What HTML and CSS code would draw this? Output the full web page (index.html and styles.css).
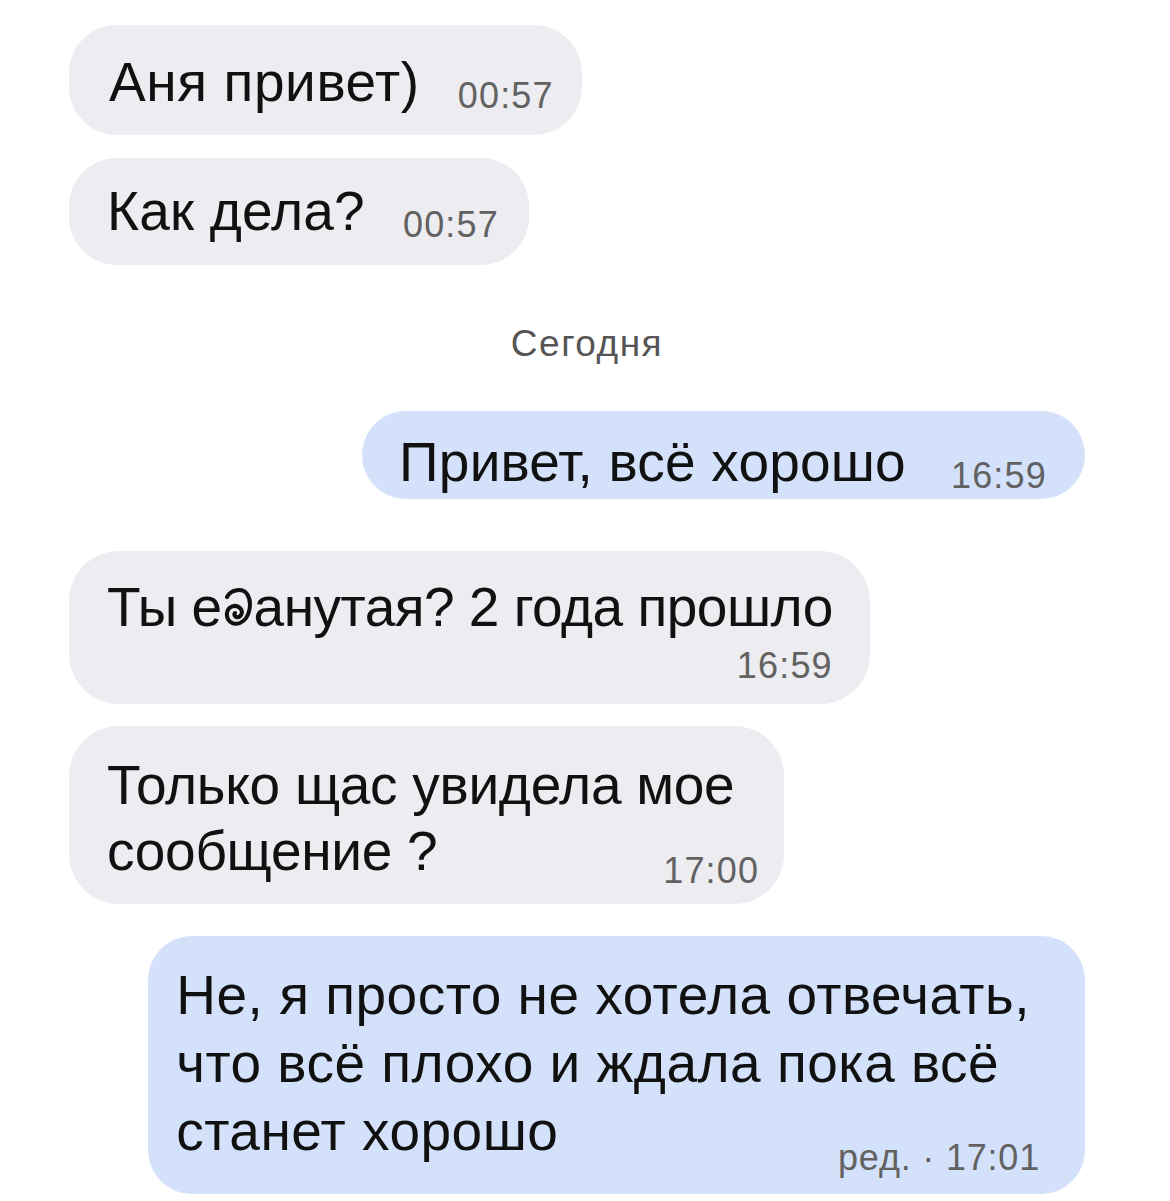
FILE: index.html
```html
<!doctype html>
<html lang="ru">
  <head>
    <meta charset="utf-8" />
    <title>Чат</title>
    <link rel="stylesheet" href="styles.css">
  </head>
  <body>
    <div class="chat">
      <div class="msg in msg-a">
        <span class="text">Аня привет)</span><span class="time">00:57</span>
      </div>
      <div class="msg in msg-b">
        <span class="text">Как дела?</span><span class="time">00:57</span>
      </div>

      <div class="day">Сегодня</div>

      <div class="msg out msg-c">
        <span class="text">Привет, всё хорошо</span><span class="time">16:59</span>
      </div>

      <div class="msg in stacked msg-d">
        <div class="text">Ты е<svg class="swirl" width="29" height="40" viewBox="0 0 29 40" aria-hidden="true"><path d="M3 11 C7 3 19 2 23 8 C28 15 27 32 16 37 C8 40 2 34 3 27 C4 20 12 18 16 22 C20 26 17 32 12 31 C10 30 10 28 11 27" /></svg>анутая? 2 года прошло</div>
        <div class="time">16:59</div>
      </div>

      <div class="msg in multi msg-e">
        <span class="text">Только щас увидела мое<br>сообщение ?</span><span class="time">17:00</span>
      </div>

      <div class="msg out multi msg-f">
        <span class="text">Не, я просто не хотела отвечать,<br>что всё плохо и ждала пока всё<br>станет хорошо</span><span class="time">ред. · 17:01</span>
      </div>
    </div>
  </body>
</html>
```

FILE: styles.css
```css
* {
  box-sizing: border-box;
}
body {
  background: #fff;
  color: #111;
  font-family: "Liberation Sans", Arial, sans-serif;
  margin: 0;
}
.chat {
  display: flex;
  flex-direction: column;
  align-items: flex-start;
  padding: 25px 85px 0 69px;
}
.msg {
  font-size: 55px;
  line-height: 62px;
  letter-spacing: 0.2px;
  border-radius: 48px;
  white-space: nowrap;
}
.msg.in {
  background: #ececf1;
}
.msg.out {
  background: #d3e1fa;
  align-self: flex-end;
}
.time {
  font-size: 36px;
  line-height: 0;
  letter-spacing: 1.2px;
  color: #626262;
  margin-left: 38px;
  vertical-align: -7px;
}
.day {
  align-self: center;
  font-size: 37px;
  color: #555;
  letter-spacing: 1.5px;
  margin: 58px 0 46px 20px;
}

/* single messages */
.msg-a {
  padding: 26px 28px 22px 40px;
}
.msg-a .text {
  letter-spacing: 0.6px;
}
.msg-b {
  margin-top: 23px;
  padding: 22px 30px 23px 38px;
}
.msg-c {
  padding: 20px 38px 6px 37px;
}
.msg-c .time {
  margin-left: 45px;
}

/* timestamp on its own line */
.stacked {
  margin-top: 52px;
  padding: 25px 37px 18px 38px;
  border-radius: 50px;
}
.stacked .text {
  letter-spacing: -0.5px;
}
.stacked .time {
  display: block;
  text-align: right;
  line-height: 40px;
  margin-top: 8px;
  vertical-align: baseline;
}
.swirl {
  vertical-align: 0;
  margin: 0 1px 0 2px;
}
.swirl path {
  fill: none;
  stroke: #111;
  stroke-width: 4;
  stroke-linecap: round;
}

/* timestamp floated on the last line */
.multi {
  border-radius: 50px;
}
.multi .time {
  float: right;
  line-height: 40px;
  vertical-align: baseline;
}
.msg-e {
  margin-top: 22px;
  line-height: 66px;
  padding: 26px 50px 13px 38px;
}
.msg-e .text {
  letter-spacing: -0.3px;
}
.msg-e .time {
  margin-top: 33px;
  margin-right: -25px;
}
.msg-f {
  margin-top: 32px;
  line-height: 68px;
  padding: 25px 55px 16px 28px;
  border-radius: 44px;
}
.msg-f .text {
  letter-spacing: 0.5px;
}
.msg-f .time {
  letter-spacing: 0.8px;
  margin-top: 41px;
  margin-right: -10px;
}
```
